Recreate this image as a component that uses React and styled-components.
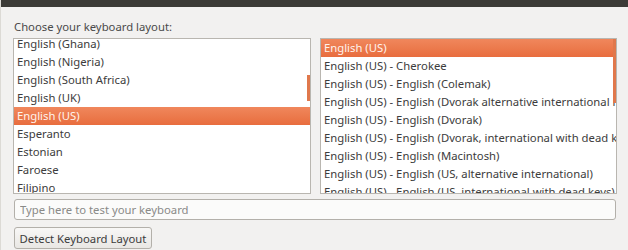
import React from "react";
import styled, { createGlobalStyle } from "styled-components";

const Global = createGlobalStyle`
  html, body { margin: 0; padding: 0; background: #f2f1f0; }
  body { font-family: "Noto Sans", "Open Sans", "DejaVu Sans", sans-serif; overflow: hidden; }
`;

const Window = styled.div`
  width: 628px;
  height: 250px;
  background: #f2f1f0;
  border-left: 1px solid #dcdad5;
  box-sizing: border-box;
  display: flex;
  flex-direction: column;
  overflow: hidden;
`;

const TitleBar = styled.div`
  height: 7px;
  background: #3c3b37;
  flex: none;
`;

const Content = styled.div`
  padding: 0 11px 0 12px;
  display: flex;
  flex-direction: column;
`;

const Label = styled.div`
  font-size: 11.3px;
  color: #4a4a4a;
  height: 31px;
  line-height: 15px;
  padding-top: 12px;
  box-sizing: border-box;
  padding-left: 1px;
`;

const Lists = styled.div`
  display: grid;
  grid-template-columns: 298px 297px;
  column-gap: 9px;
  height: 156px;
`;

const ListBox = styled.div`
  position: relative;
  background: #ffffff;
  border: 1px solid #b9b6b0;
  overflow: hidden;
  box-sizing: border-box;
`;

const Rows = styled.div`
  display: flex;
  flex-direction: column;
  margin-top: ${(p) => p.$offset || 0}px;
`;

const Row = styled.div`
  height: 18px;
  line-height: 18px;
  font-size: 11.3px;
  padding-left: 3px;
  white-space: nowrap;
  color: ${(p) => (p.$selected ? "#fff3ec" : "#3c3c3c")};
  background: ${(p) =>
    p.$selected ? "linear-gradient(#f0875c, #e86d3e)" : "transparent"};
`;

const Scroll = styled.div`
  position: absolute;
  right: ${(p) => p.$right}px;
  top: ${(p) => p.$top}px;
  width: 3px;
  height: ${(p) => p.$h}px;
  background: #e0784c;
`;

const Input = styled.input`
  margin: 5px 0 0 1px;
  width: 602px;
  height: 21px;
  box-sizing: border-box;
  border: 1px solid #b3b0aa;
  border-radius: 3px;
  background: #fbfbfa;
  font-family: inherit;
  font-size: 11.3px;
  padding: 0 5px;
  color: #3c3c3c;
  outline: none;
  &::placeholder { color: #8a8a88; }
`;

const Button = styled.button`
  margin: 7px 0 0 1px;
  align-self: flex-start;
  width: 138px;
  height: 22px;
  box-sizing: border-box;
  border: 1px solid #b3b0aa;
  border-radius: 3px;
  background: linear-gradient(#f8f7f6, #e9e7e4);
  font-family: inherit;
  font-size: 11.3px;
  color: #3c3c3c;
  padding: 0 4px;
  white-space: nowrap;
`;

const left = [
  "English (Ghana)",
  "English (Nigeria)",
  "English (South Africa)",
  "English (UK)",
  "English (US)",
  "Esperanto",
  "Estonian",
  "Faroese",
  "Filipino",
];

const right = [
  "English (US)",
  "English (US) - Cherokee",
  "English (US) - English (Colemak)",
  "English (US) - English (Dvorak alternative international no dead keys)",
  "English (US) - English (Dvorak)",
  "English (US) - English (Dvorak, international with dead keys)",
  "English (US) - English (Macintosh)",
  "English (US) - English (US, alternative international)",
  "English (US) - English (US, international with dead keys)",
];

export default function App() {
  return (
    <>
      <Global />
      <Window>
        <TitleBar />
        <Content>
          <Label>Choose your keyboard layout:</Label>
          <Lists>
            <ListBox>
              <Rows $offset={-4}>
                {left.map((t) => (
                  <Row key={t} $selected={t === "English (US)"}>
                    {t}
                  </Row>
                ))}
              </Rows>
              <Scroll $right={0} $top={36} $h={26} />
            </ListBox>
            <ListBox>
              <Rows>
                {right.map((t, i) => (
                  <Row key={t} $selected={i === 0}>
                    {t}
                  </Row>
                ))}
              </Rows>
              <Scroll $right={0} $top={0} $h={64} />
            </ListBox>
          </Lists>
          <Input placeholder="Type here to test your keyboard" />
          <Button>Detect Keyboard Layout</Button>
        </Content>
      </Window>
    </>
  );
}
